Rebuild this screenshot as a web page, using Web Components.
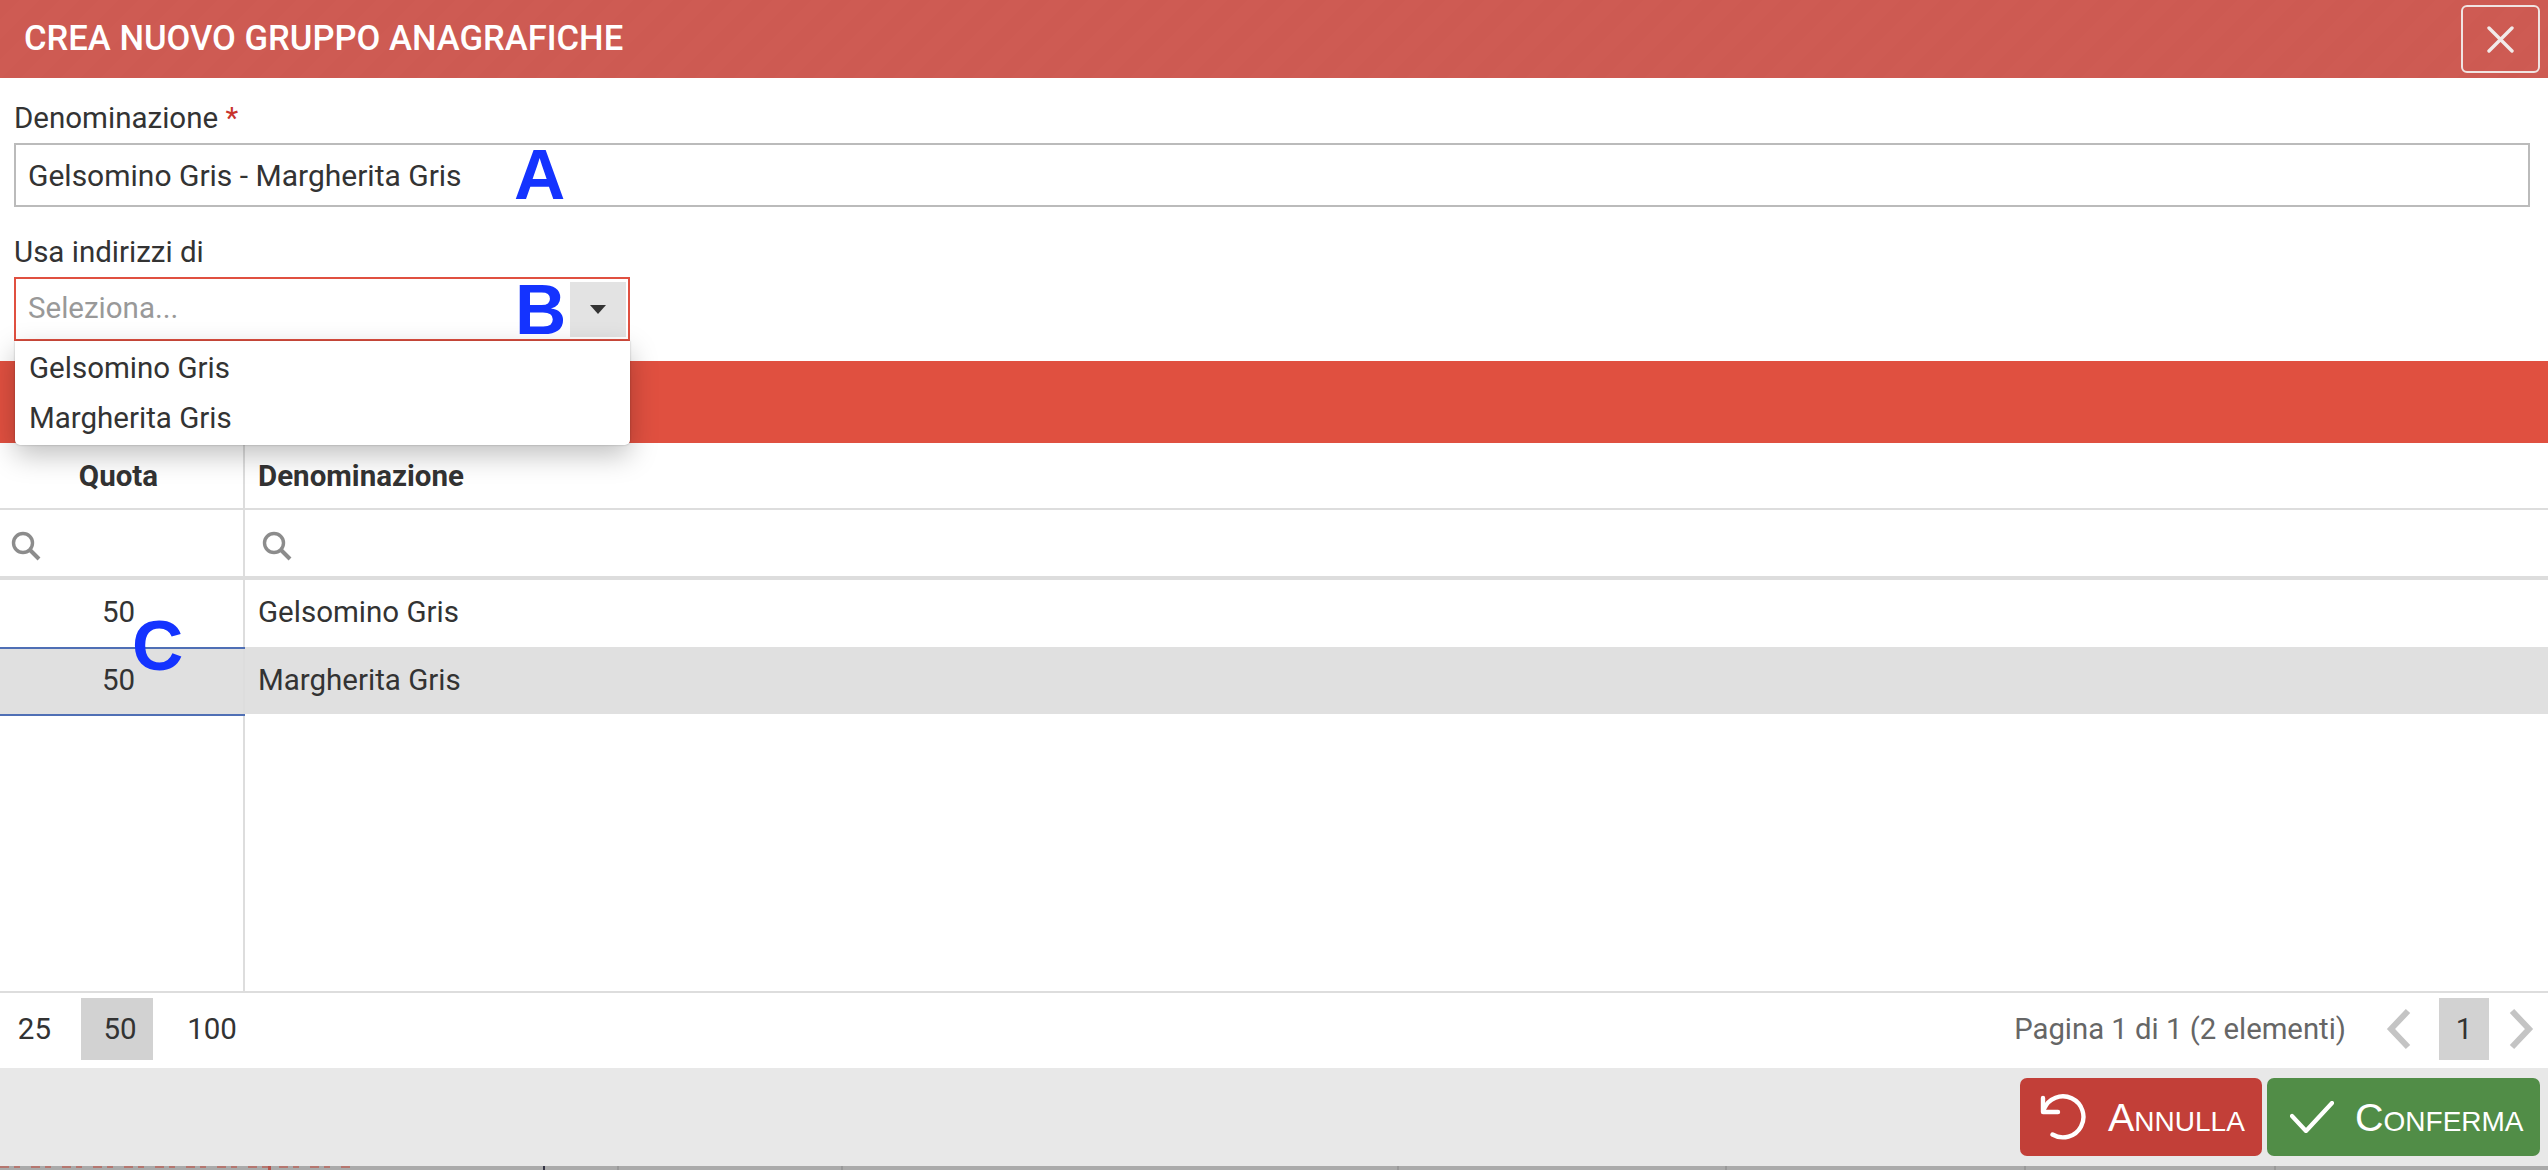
<!DOCTYPE html>
<html><head><meta charset="utf-8"><style>
html,body{margin:0;padding:0;background:#fff}
body{font-family:Roboto,"Liberation Sans",sans-serif;color:#333;overflow:hidden}
</style></head><body>
<app-dialog>
  <dlg-header slot="header" title-text="CREA NUOVO GRUPPO ANAGRAFICHE"></dlg-header>
  <dlg-form slot="form"></dlg-form>
  <dlg-grid slot="grid"></dlg-grid>
  <dlg-pager slot="pager"></dlg-pager>
  <dlg-footer slot="footer"></dlg-footer>
</app-dialog>
<script>
function def(name,html,init){
  customElements.define(name,class extends HTMLElement{
    constructor(){super();this.attachShadow({mode:'open'}).innerHTML=html;}
    connectedCallback(){if(init)init(this);}
  });
}
const searchIcon=`<svg width="30" height="30" viewBox="0 0 30 30" fill="none" stroke="#8c8c8c"><circle cx="12" cy="12" r="9.5" stroke-width="3.4"/><path d="M19 19 L28 28" stroke-width="4"/></svg>`;
const ticks=[[268,3,'#b5544c',4],[543,2,'#334',4],[617,2,'#999',4],[841,2,'#999',4],[1397,2,'#999',4],[1725,2,'#999',4],[2024,2,'#999',4],[2274,2,'#999',4]];
const tickBg=ticks.map(t=>`linear-gradient(${t[2]},${t[2]}) ${t[0]}px 0/${t[1]}px ${t[3]}px no-repeat`).join(',');
def('app-dialog',`<style>
:host{display:flex;flex-direction:column;width:2548px;height:1170px;overflow:hidden;position:relative}
.under{height:4px;flex:none;background:${tickBg},repeating-linear-gradient(90deg,#b5766f 0 9px,transparent 9px 14px,#b5766f 14px 20px,transparent 20px 31px) 0 0/355px 2px no-repeat,#aaa}
</style>
<slot name="header"></slot><slot name="form"></slot><slot name="grid"></slot><slot name="pager"></slot><slot name="footer"></slot>
<div class="under"></div>`);
def('dlg-header',`<style>
:host{display:flex;flex:none;height:78px;align-items:center;justify-content:space-between;box-sizing:border-box;padding:0 8px 0 24px;
background:repeating-linear-gradient(135deg,#cd5a52 0 14px,#ce5b53 14px 28px);color:#fff;font-size:34.6px;font-weight:500}
span{margin-top:-3px}
button{all:unset;box-sizing:border-box;width:79px;height:68px;border:2px solid #f0e4e2;border-radius:6px;display:flex;align-items:center;justify-content:center}
</style><span id="t"></span><button aria-label="Chiudi"><svg width="27" height="27" viewBox="0 0 27 27"><path d="M2 2 25 25M25 2 2 25" stroke="#f2ebea" stroke-width="3.4" stroke-linecap="round"/></svg></button>`,
el=>{el.shadowRoot.getElementById('t').textContent=el.getAttribute('title-text');});
def('dlg-form',`<style>
:host{display:block;flex:none;height:283px;position:relative;box-sizing:border-box;padding:20px 18px 0 14px;font-size:29.5px;color:#333}
label{display:block;line-height:40px}
label b{font-weight:400;color:#c8332c}
.input{box-sizing:border-box;height:64px;border:2px solid #bbb;display:flex;align-items:center;padding-left:12px;margin-bottom:25px;margin-top:5px;font-size:30px}
.select{box-sizing:border-box;width:616px;height:64px;border:2px solid #e05040;display:flex;align-items:center;justify-content:space-between;padding:3px 2px 3px 12px;margin-top:5px;color:#999;position:relative;z-index:2}
.select>span:first-child{margin-top:-2px}
.arrow{width:56px;height:55px;background:#e3e3e3;display:flex;align-items:center;justify-content:center}
.bar{position:absolute;left:0;right:0;top:283px;height:82px;background:#e05040}
.menu{position:absolute;z-index:3;left:15px;top:263px;width:615px;height:104px;box-sizing:border-box;background:#fff;border-radius:0 0 5px 5px;padding:2px 14px 0;box-shadow:0 0 2px rgba(0,0,0,.3),0 10px 28px rgba(0,0,0,.25);color:#333}
.menu div{height:50px;line-height:50px}
.mark{position:absolute;z-index:4;font:700 71px "Liberation Sans",Arial,sans-serif;color:#1433ff;line-height:1}
</style>
<label>Denominazione <b>*</b></label>
<div class="input">Gelsomino Gris - Margherita Gris</div>
<label>Usa indirizzi di</label>
<div class="select"><span>Seleziona...</span><span class="arrow"><svg width="16" height="9" viewBox="0 0 16 9"><path d="M0 0H16L8 9Z" fill="#333"/></svg></span></div>
<div class="bar"></div>
<div class="menu"><div>Gelsomino Gris</div><div>Margherita Gris</div></div>
<span class="mark" style="left:514px;top:61px">A</span>
<span class="mark" style="left:515px;top:196px">B</span>`);
def('dlg-grid',`<style>
:host{display:grid;flex:1;min-height:0;grid-template-columns:245px 1fr;grid-template-rows:65px 68px 4px 67px 2px 65px 2px 1fr 2px;font-size:29.5px;color:#333;position:relative;margin-top:82px}
.c{display:flex;align-items:center;box-sizing:border-box;border-right:2px solid #ddd;white-space:nowrap}
.r{border-right:0;padding-left:13px}
.l{justify-content:center;padding-right:6px}
.row{padding-bottom:3px}
.head{font-weight:700}
.l2{padding:5px 0 0 11px}
.r2{padding:5px 0 0 17px}
.rule{grid-column:1/3;background:#ddd}
.b{background:#4f6fb5}
.sel{background:#e0e0e0}
.mark{position:absolute;left:132px;top:167px;font:700 71px "Liberation Sans",Arial,sans-serif;color:#1433ff;line-height:1}
</style>
<div class="c l head">Quota</div><div class="c r head">Denominazione</div>
<div class="c l2" style="border-top:2px solid #ddd">${searchIcon}</div><div class="c r2" style="border-right:0;border-top:2px solid #ddd">${searchIcon}</div>
<div class="rule"></div>
<div class="c l row">50</div><div class="c r row">Gelsomino Gris</div>
<div class="b"></div><div class="sel"></div>
<div class="c l sel row">50</div><div class="c r sel row">Margherita Gris</div>
<div class="b"></div><div></div>
<div class="c"></div><div></div>
<div class="rule"></div>
<span class="mark">C</span>`);
def('dlg-pager',`<style>
:host{display:flex;flex:none;height:75px;align-items:center;justify-content:space-between;font-size:29.5px;color:#333;box-sizing:border-box;padding:5px 14px 8px 0}
.g{display:flex;align-items:center;height:62px}
.s{display:flex;align-items:center;justify-content:center;height:62px;box-sizing:border-box}
.on{background:#d2d2d2}
.info{color:#666;margin-right:40px;font-size:29.3px}
</style>
<div class="g"><span class="s" style="width:81px;justify-content:flex-end;padding-right:30px">25</span><span class="s on" style="width:72px;padding-left:6px">50</span><span class="s" style="width:118px">100</span></div>
<div class="g"><span class="info">Pagina 1 di 1 (2 elementi)</span>
<svg width="25" height="42" viewBox="0 0 25 42" style="margin-right:28px"><path d="M22 3 5 21 22 39" fill="none" stroke="#c4c4c4" stroke-width="6"/></svg>
<span class="s on" style="width:50px">1</span>
<svg width="25" height="42" viewBox="0 0 25 42" style="margin-left:20px"><path d="M3 3 20 21 3 39" fill="none" stroke="#c4c4c4" stroke-width="6"/></svg></div>`);
def('dlg-footer',`<style>
:host{display:flex;flex:none;height:98px;background:#e8e8e8;box-sizing:border-box;padding:10px 8px;justify-content:flex-end;gap:5px}
button{all:unset;box-sizing:border-box;height:78px;border-radius:7px;display:flex;align-items:center;color:#fff;font:400 39.5px "Liberation Sans",Arial,sans-serif;font-variant:small-caps;white-space:nowrap}
svg{flex:none}
.a{background:#c23f38;width:242px;padding-left:20px;gap:20px}
.o{background:#518d47;width:273px;padding-left:23px;gap:21px}
</style>
<button class="a"><svg width="48" height="46" viewBox="0 0 48 46" fill="none" stroke="#fff" stroke-width="4.4" stroke-linecap="round" stroke-linejoin="round"><path d="M3 4V18H18"/><path d="M4 15A20.5 20.5 0 1 1 12.5 40.5"/></svg><span>Annulla</span></button>
<button class="o"><svg width="44" height="32" viewBox="0 0 44 32" fill="none" stroke="#fff" stroke-width="4.2" stroke-linecap="round" stroke-linejoin="round"><path d="M2 15 16 30 42 2"/></svg><span>Conferma</span></button>`);
</script>
</body></html>
